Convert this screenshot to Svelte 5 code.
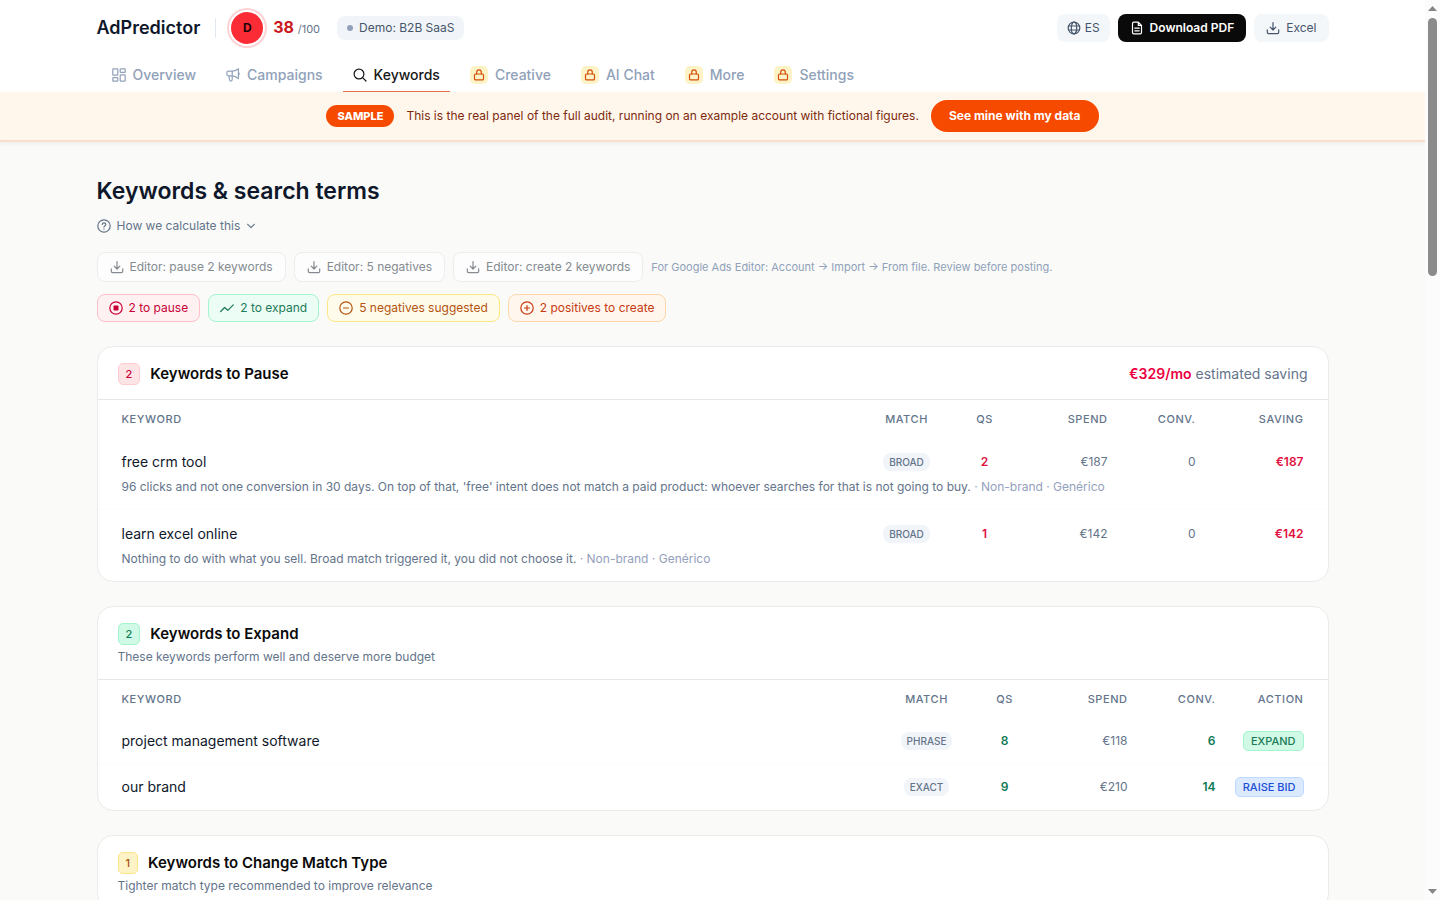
<script>
  const lockedTabs = ['Creative', 'AI Chat', 'More', 'Settings'];
  const exportsList = ['Editor: pause 2 keywords', 'Editor: 5 negatives', 'Editor: create 2 keywords'];
  const pauseRows = [
    {
      keyword: 'free crm tool', match: 'BROAD', qs: 2, spend: '€187', conv: 0, saving: '€187',
      reason: "96 clicks and not one conversion in 30 days. On top of that, 'free' intent does not match a paid product: whoever searches for that is not going to buy."
    },
    {
      keyword: 'learn excel online', match: 'BROAD', qs: 1, spend: '€142', conv: 0, saving: '€142',
      reason: 'Nothing to do with what you sell. Broad match triggered it, you did not choose it.'
    }
  ];
  const expandRows = [
    { keyword: 'project management software', match: 'PHRASE', qs: 8, spend: '€118', conv: 6, action: 'EXPAND', tone: 'green' },
    { keyword: 'our brand', match: 'EXACT', qs: 9, spend: '€210', conv: 14, action: 'RAISE BID', tone: 'blue' }
  ];
</script>

{#snippet download()}
  <svg class="icon" viewBox="0 0 14 14" aria-hidden="true"><path d="M7 1.5v7.2M4.2 6.2 7 9l2.8-2.8M1.3 8.8v2.5c0 .8.5 1.3 1.3 1.3h8.8c.8 0 1.3-.5 1.3-1.3V8.8" /></svg>
{/snippet}

<div class="page">
  <header>
    <div class="wrap">
      <div class="top">
        <a class="brand" href="#home">AdPredictor</a>
        <span class="rule"></span>
        <span class="grade">D</span>
        <span class="score"><b>38</b> <small>/100</small></span>
        <span class="account"><i></i>Demo: B2B SaaS</span>
        <div class="tools">
          <button class="tool lang">
            <svg class="icon" viewBox="0 0 14 14" aria-hidden="true"><circle cx="7" cy="7" r="5.8" /><ellipse cx="7" cy="7" rx="2.7" ry="5.8" /><path d="M1.6 5h10.8M1.6 9h10.8" /></svg>ES
          </button>
          <button class="tool dark">
            <svg class="icon" viewBox="0 0 14 14" aria-hidden="true"><path d="M8.3 1.2H3.8c-.8 0-1.3.5-1.3 1.3v9c0 .8.5 1.3 1.3 1.3h6.4c.8 0 1.3-.5 1.3-1.3V4.4L8.3 1.2v3.2h3.2M4.8 7.2h4.4M4.8 9.8h4.4" /></svg>Download PDF
          </button>
          <button class="tool">{@render download()}Excel</button>
        </div>
      </div>
      <nav aria-label="Sections">
        <a href="#overview">
          <svg class="icon" viewBox="0 0 14 14" aria-hidden="true"><rect x=".8" y=".8" width="5" height="6.4" rx=".7" /><rect x="8.2" y=".8" width="5" height="3.6" rx=".7" /><rect x=".8" y="9.6" width="5" height="3.6" rx=".7" /><rect x="8.2" y="6.8" width="5" height="6.4" rx=".7" /></svg>Overview
        </a>
        <a href="#campaigns">
          <svg class="icon" viewBox="0 0 14 14" aria-hidden="true"><path d="M6.2 3.2H2.6C1.5 3.2.8 4 .8 5v1c0 1.100.8 1.800 1.800 1.800h3.600c2 0 4.200 1 6.200 2.800V.8C10.400 2.300 8.200 3.200 6.200 3.200zM6.200 3.200v8.400c0 1-.5 1.500-1.200 1.500s-1.200-.5-1.400-1.200L2.800 7.800M12.400 4.600c1.100.4 1.100 1.900 0 2.300" /></svg>Campaigns
        </a>
        <a href="#keywords" class="active" aria-current="page">
          <svg class="icon" viewBox="0 0 14 14" aria-hidden="true"><circle cx="6" cy="6" r="4.900" /><path d="m9.600 9.600 3.400 3.400" /></svg>Keywords
        </a>
        {#each lockedTabs as tab}
          <a href="#locked" class="locked">
            <span class="lock"><svg class="icon" viewBox="0 0 12 12" aria-hidden="true"><rect x="1.500" y="5" width="9" height="5.900" rx="1" /><path d="M3.700 5V3.200a2.300 2.300 0 0 1 4.600 0V5" /></svg></span>{tab}
          </a>
        {/each}
      </nav>
    </div>
  </header>

  <div class="banner">
    <span class="sample">SAMPLE</span>
    <span>This is the real panel of the full audit, running on an example account with fictional figures.</span>
    <button class="cta">See mine with my data</button>
  </div>

  <main class="wrap">
    <h1>Keywords &amp; search terms</h1>
    <button class="how">
      <svg class="icon" viewBox="0 0 14 14" aria-hidden="true"><circle cx="7" cy="7" r="6.200" /><path d="M5.200 5.500c.1-1 .8-1.600 1.800-1.600s1.800.6 1.800 1.500c0 1.300-1.800 1.300-1.800 2.600M7 9.800v.3" /></svg>
      How we calculate this
      <svg class="icon chevron" viewBox="0 0 10 10" aria-hidden="true"><path d="m1.700 3.300 3.300 3.400 3.300-3.400" /></svg>
    </button>

    <div class="line exports">
      {#each exportsList as label}
        <button class="export">{@render download()}{label}</button>
      {/each}
      <span class="hint">For Google Ads Editor: Account → Import → From file. Review before posting.</span>
    </div>

    <div class="line chips">
      <a class="chip rose" href="#pause"><svg class="icon" viewBox="0 0 14 14" aria-hidden="true"><circle cx="7" cy="7" r="6.200" /><rect x="4.500" y="4.500" width="5" height="5" rx=".8" fill="currentColor" stroke="none" /></svg>2 to pause</a>
      <a class="chip green" href="#expand"><svg class="icon" viewBox="0 0 14 14" aria-hidden="true"><path d="m.7 10.500 3.900-4 3.200 2.800 5.500-5.500" /></svg>2 to expand</a>
      <a class="chip amber" href="#negatives"><svg class="icon" viewBox="0 0 14 14" aria-hidden="true"><circle cx="7" cy="7" r="6.200" /><path d="M4.500 7h5" /></svg>5 negatives suggested</a>
      <a class="chip orange" href="#positives"><svg class="icon" viewBox="0 0 14 14" aria-hidden="true"><circle cx="7" cy="7" r="6.200" /><path d="M4.500 7h5M7 4.500v5" /></svg>2 positives to create</a>
    </div>

    <section class="card" id="pause">
      <div class="head">
        <div class="title"><span class="count rose">2</span><h2>Keywords to Pause</h2>
          <p class="total"><b>€329/mo</b> estimated saving</p></div>
      </div>
      <table>
        <colgroup><col /><col class="match" /><col class="qs" /><col class="spend" /><col class="conv" /><col class="saving" /></colgroup>
        <thead><tr><th>KEYWORD</th><th class="mid">MATCH</th><th class="mid">QS</th><th class="num">SPEND</th><th class="num">CONV.</th><th class="num">SAVING</th></tr></thead>
        {#each pauseRows as row}
          <tbody>
            <tr class="lead"><td class="keyword">{row.keyword}</td><td class="mid"><span class="type">{row.match}</span></td><td class="mid bad">{row.qs}</td><td class="num">{row.spend}</td><td class="num">{row.conv}</td><td class="num bad">{row.saving}</td></tr>
            <tr class="detail"><td colspan="6">{row.reason} <span>· Non-brand · Genérico</span></td></tr>
          </tbody>
        {/each}
      </table>
    </section>

    <section class="card" id="expand">
      <div class="head">
        <div class="title"><span class="count green">2</span><h2>Keywords to Expand</h2></div>
        <p class="sub">These keywords perform well and deserve more budget</p>
      </div>
      <table>
        <colgroup><col /><col class="match" /><col class="qs" /><col class="spend" /><col class="conv" /><col class="action" /></colgroup>
        <thead><tr><th>KEYWORD</th><th class="mid">MATCH</th><th class="mid">QS</th><th class="num">SPEND</th><th class="num">CONV.</th><th class="num">ACTION</th></tr></thead>
        <tbody>
          {#each expandRows as row}
            <tr class="single"><td class="keyword">{row.keyword}</td><td class="mid"><span class="type">{row.match}</span></td><td class="mid good">{row.qs}</td><td class="num">{row.spend}</td><td class="num good">{row.conv}</td><td class="num"><span class="act {row.tone}">{row.action}</span></td></tr>
          {/each}
        </tbody>
      </table>
    </section>

    <section class="card">
      <div class="head">
        <div class="title"><span class="count amber">1</span><h2>Keywords to Change Match Type</h2></div>
        <p class="sub">Tighter match type recommended to improve relevance</p>
      </div>
    </section>
  </main>
</div>

<div class="rail" aria-hidden="true">
  <svg viewBox="0 0 9 5"><path d="M0 5 4.500 0 9 5z" /></svg>
  <span></span>
  <svg class="down" viewBox="0 0 9 5"><path d="M0 0h9L4.500 5z" /></svg>
</div>

<style>
  :global(html) { scrollbar-width: none; }
  :global(body) { margin: 0; background: #fafaf8; }
  .page { padding-right: 15px; font: 13px/20px Inter, "Open Sans", sans-serif; color: #64748b; }
  .page * { box-sizing: border-box; }
  h1, h2, p { margin: 0; }
  a { color: inherit; text-decoration: none; }
  button { font: inherit; color: inherit; border: 0; margin: 0; cursor: pointer; white-space: nowrap; }
  .icon { width: 14px; height: 14px; flex: none; fill: none; stroke: currentColor; stroke-width: 1.2; stroke-linecap: round; stroke-linejoin: round; }
  .wrap { max-width: 1280px; margin: 0 auto; padding: 0 24px; box-sizing: border-box; }
  header { background: #fff; }

  .top { display: flex; align-items: center; height: 56px; }
  .brand { font-size: 18px; font-weight: 600; color: #0f172a; }
  .rule { width: 1px; height: 20px; background: #e2e8f0; margin: 0 15px; }
  .grade { width: 32px; height: 32px; border-radius: 50%; display: grid; place-items: center; background: #fb2c36; color: #1a0305; font-size: 12px; font-weight: 700; box-shadow: 0 0 0 2px #fff, 0 0 0 4px #ffd3d6; }
  .score { margin: 0 17px 0 10px; white-space: nowrap; }
  .score b { font-size: 16px; font-weight: 700; color: #c91820; }
  .score small { font-size: 11px; }
  .account { display: flex; align-items: center; gap: 6px; height: 24px; padding: 0 10px; border-radius: 8px; background: #f1f5f9; color: #475569; font-size: 12px; white-space: nowrap; }
  .account i { width: 6px; height: 6px; border-radius: 50%; background: #90a1b9; }
  .tools { display: flex; gap: 8px; margin-left: auto; }
  .tool { display: flex; align-items: center; gap: 6px; height: 28px; padding: 0 12px; border-radius: 8px; background: #f4f7fa; color: #45556c; font-size: 12px; }
  .tool.lang { gap: 4px; padding: 0 10px; }
  .tool.dark { background: #0a0a0a; color: #fff; font-weight: 600; }

  nav { display: flex; gap: 10px; padding: 0 5px; }
  nav a { display: flex; align-items: center; gap: 7px; height: 36px; padding: 2px 10px 0; border-bottom: 1px solid transparent; color: #90a1b9; font-size: 14px; font-weight: 500; white-space: nowrap; }
  nav a.active { color: #171717; border-color: #e8704a; }
  .lock { width: 18px; height: 18px; border-radius: 5px; background: #fef3c6; color: #d4500c; display: grid; place-items: center; }
  .lock .icon { width: 12px; height: 12px; }

  .banner { display: flex; align-items: center; justify-content: center; gap: 12px; height: 50px; border-bottom: 2px solid #f9dfcb; background: #fff6ec; color: #7e2a0c; font-size: 12px; box-shadow: 0 2px 4px #0000000d; padding: 0 16px; }
  .sample { padding: 0 11px; line-height: 22px; border-radius: 11px; background: #f54a00; color: #fff; font-size: 11px; font-weight: 800; }
  .cta { height: 32px; padding: 0 18px; border-radius: 16px; background: #f54a00; color: #fff; font-size: 12px; font-weight: 700; }

  h1 { padding-top: 32px; font-size: 23px; line-height: 34px; font-weight: 600; color: #0f172a; }
  .how { display: flex; align-items: center; gap: 6px; margin-top: 8px; padding: 0; background: none; font-size: 12px; line-height: 20px; }
  .how .chevron { width: 10px; height: 10px; }
  .line { display: flex; align-items: center; gap: 8px; }
  .exports { margin-top: 16px; }
  .export { display: flex; align-items: center; gap: 6px; height: 30px; padding: 0 12px; border: 1px solid #ededee; border-radius: 8px; background: #fdfdfd; color: #858b91; font-size: 12px; }
  .hint { font-size: 11px; color: #90a1b9; }
  .chips { margin: 12px 0 24px; }
  .chip { display: flex; align-items: center; gap: 6px; height: 28px; padding: 0 11px; border: 1px solid; border-radius: 8px; font-size: 12px; white-space: nowrap; }
  .chip.rose { background: #fff1f2; border-color: #ffc0c9; color: #c70036; }
  .chip.green { background: #ecfdf5; border-color: #a4f4cf; color: #1c7a58; }
  .chip.amber { background: #fffbeb; border-color: #fee685; color: #b4530f; }
  .chip.orange { background: #fff7ed; border-color: #ffd6a8; color: #c83a12; }

  .card { margin-bottom: 24px; border: 1px solid #ebebea; border-radius: 16px; background: #fff; overflow: hidden; }
  .head { padding: 16px 20px 14px; border-bottom: 1px solid #e5e7eb; }
  .title { display: flex; align-items: center; gap: 10px; height: 22px; }
  .count { padding: 0 7px; border: 1px solid; border-radius: 5px; font-size: 11px; line-height: 20px; font-weight: 500; }
  .count.rose { background: #ffe4e6; border-color: #ffccd3; color: #c70036; }
  .count.green { background: #d0fae5; border-color: #a4f4cf; color: #0f7a56; }
  .count.amber { background: #fef3c6; border-color: #fee685; color: #a8500b; }
  h2 { font-size: 15px; font-weight: 600; color: #0a0a0a; }
  .total { margin-left: auto; font-size: 14px; }
  .total b { color: #ec003f; font-weight: 600; }
  .sub { margin: 2px 0 -2px; font-size: 12px; }

  table { width: 100%; table-layout: fixed; border-collapse: separate; border-spacing: 0; }
  .match { width: 86px; }
  .qs { width: 70px; }
  .spend { width: 100px; }
  .conv { width: 88px; }
  .saving { width: 120px; }
  .action { width: 100px; }
  th, td { padding: 0 12px; text-align: left; white-space: nowrap; }
  th:first-child, td:first-child { padding-left: 24px; }
  th:last-child, td:last-child { padding-right: 24px; }
  th { height: 38px; font-size: 11px; font-weight: 500; letter-spacing: 0.05em; }
  .mid { text-align: center; }
  .num { text-align: right; font-size: 12px; }
  th.num { font-size: 11px; }
  td.mid { font-size: 12px; font-weight: 600; }
  .keyword { font-size: 14px; color: #0f172a; }
  .lead td { height: 36px; padding-top: 12px; line-height: 24px; }
  .single td { height: 46px; }
  .single:not(:last-child) td { border-bottom: 1px solid #fbfcfd; }
  .detail td { height: 36px; padding-top: 3px; padding-bottom: 12px; font-size: 12px; white-space: normal; border-bottom: 1px solid #fbfcfd; }
  tbody:last-child .detail td { height: 35px; border-bottom: 0; }
  .detail span { color: #94a0bd; }
  td.bad { color: #e0103f; font-weight: 600; }
  td.good { color: #0f7a56; font-weight: 600; }
  .type { display: inline-block; padding: 0 6px; border-radius: 8px; background: #f1f5f9; color: #64748b; font-size: 10px; line-height: 18px; font-weight: 500; }
  .act { display: inline-block; margin-left: -12px; padding: 0 7px; border: 1px solid; border-radius: 5px; font-size: 11px; line-height: 18px; font-weight: 500; }
  .act.green { background: #d0fae5; border-color: #a4f4cf; color: #1c7a58; }
  .act.blue { background: #dbeafe; border-color: #bedbff; color: #1d4ed8; }

  .rail { position: fixed; top: 0; right: 0; bottom: 0; width: 15px; padding: 6px 0; box-sizing: border-box; background: #fcfcfc; display: flex; flex-direction: column; align-items: center; }
  .rail svg { width: 9px; height: 5px; fill: #858585; }
  .rail span { width: 9px; height: 29%; margin-top: 7px; border-radius: 5px; background: #8b8b8b; }
  .rail .down { margin-top: auto; }
</style>
